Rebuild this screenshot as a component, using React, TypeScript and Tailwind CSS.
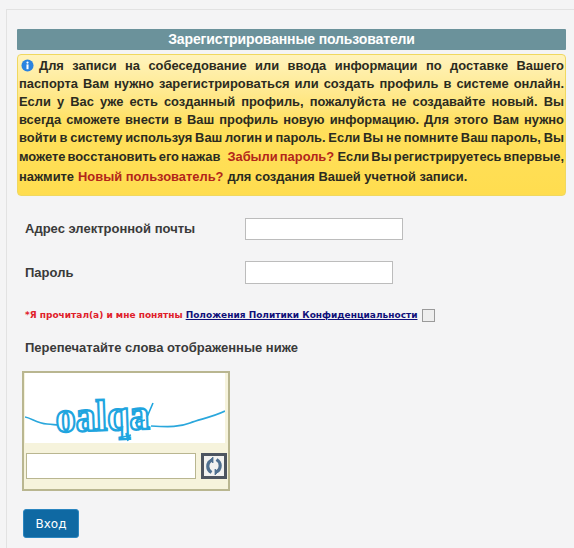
import React from 'react';

const Captcha = () => (
  <svg viewBox="0 0 200 70" className="block w-[200px] h-[70px] bg-white">
    <path d="M0 44 C 6 45 12 50 22 51 S 30 52 34 52 M126 53 C 145 54 155 54 165 50 S 185 45 200 38" fill="none" stroke="#2aa7dc" strokeWidth="1.7" />
    <text x="0" y="0" fontFamily="Liberation Serif" fontWeight="700" fontSize="44" fill="#fff" stroke="#1fa5df" strokeWidth="2.4" textLength="94" lengthAdjust="spacingAndGlyphs" transform="translate(31 59) rotate(-2)">oalqa</text>
    <path d="M98 64 L106 62 M101 60 L103 68 M128 30 L122 44 M110 50 L120 47" stroke="#1fa5df" strokeWidth="1.6" fill="none" />
  </svg>
);

const App: React.FC = () => {
  return (
    <div className="h-[548px] overflow-hidden bg-[#f4f4f5] pt-[9px] pl-[6px] font-['Liberation_Sans',sans-serif]">
      <div className="h-full border-t border-l border-[#e2e2e2] pl-[10px] pt-[19px] pr-[8px]">
        {/* Header */}
        <div className="h-[21px] bg-[#6b929b] text-center text-white text-[14px] font-bold leading-[21px] rounded-[1px] tracking-[-0.13px]">
          Зарегистрированные пользователи
        </div>

        {/* Notice */}
        <div className="mt-[4px] h-[142px] rounded-[4px] border border-[#f0d860] bg-gradient-to-b from-[#fff3bd] via-[#ffe05c] to-[#ffdd4f] px-[1px] pt-[2px] text-[12.9px] leading-[18px] font-bold text-[#2b2b20]">
          <div className="text-justify [text-align-last:justify] [word-spacing:-1.5px]">
            <svg viewBox="0 0 14 14" className="inline-block w-[13px] h-[13px] mr-[5px] mb-[3px] ml-[2px] align-middle">
              <circle cx="7" cy="7" r="6.5" fill="#2a83e0" />
              <circle cx="7" cy="3.8" r="1.2" fill="#fff" />
              <rect x="5.9" y="5.8" width="2.2" height="5.2" fill="#fff" />
            </svg>
            Для записи на собеседование или ввода информации по доставке Вашего паспорта Вам нужно зарегистрироваться или создать профиль в системе онлайн. Если у Вас уже есть созданный профиль, пожалуйста не создавайте новый. Вы всегда сможете внести в Ваш профиль новую информацию. Для этого Вам нужно войти в систему используя Ваш логин и пароль. Если Вы не помните Ваш пароль, Вы
          </div>
          <div className="mt-[1px] flex whitespace-nowrap [word-spacing:-1.5px]">
            <span>можете восстановить его нажав</span>
            <span className="ml-[7px] text-[#b3261a]">Забыли пароль?</span>
            <span className="ml-auto">Если Вы регистрируетесь впервые,</span>
          </div>
          <div className="mt-[2px] flex gap-[4px]">
            <span>нажмите</span>
            <span className="text-[#b3261a]">Новый пользователь?</span>
            <span>для создания Вашей учетной записи.</span>
          </div>
        </div>

        {/* Form */}
        <div className="mt-[22px] flex items-center h-[22px]">
          <label className="w-[220px] pl-[8px] text-[13px] font-bold text-[#3a3a3a]">Адрес электронной почты</label>
          <input className="ml-[8px] w-[158px] h-[22px] bg-white border border-[#bcbcbc] outline-none" />
        </div>
        <div className="mt-[21px] flex items-center h-[23px]">
          <label className="w-[220px] pl-[8px] pt-[1px] text-[13px] font-bold text-[#3a3a3a]">Пароль</label>
          <input className="ml-[8px] w-[148px] h-[23px] bg-white border border-[#bcbcbc] outline-none" />
        </div>

        <div className="mt-[23px] flex items-center h-[18px] pl-[8px] text-[9px] font-bold font-['DejaVu_Sans',sans-serif]">
          <span className="text-[#e0202a]">*Я прочитал(а) и мне понятны</span>
          <a className="ml-[3px] text-[#10107a] underline">Положения Политики Конфиденциальности</a>
          <span className="ml-[4px] mb-[2px] w-[13px] h-[13px] bg-[#eeeeee] border border-[#9a9a9a]" />
        </div>

        <div className="mt-[14px] pl-[8px] text-[13px] leading-[18px] font-bold text-[#3a3a3a]">
          Перепечатайте слова отображенные ниже
        </div>

        {/* Captcha */}
        <div className="mt-[14px] ml-[5px] w-[208px] h-[120px] border-2 border-[#b9b690] bg-[#f6f3dc] pl-[1px]">
          <Captcha />
          <div className="mt-[10px] flex items-center gap-[5px]">
            <input className="ml-[1px] w-[170px] h-[26px] bg-white border border-[#b9b690] outline-none" />
            <div className="w-[26px] h-[26px] border-[3px] border-[#4d5560] bg-[#f2f2f0] flex items-center justify-center">
              <svg viewBox="0 0 20 20" className="w-[20px] h-[20px]" fill="none" stroke="#4f7090" strokeWidth="3.2">
                <path d="M8.5 4 C 5 5 3.8 8 3.8 10.5 S 5 15 7.5 16.5" />
                <path d="M11.5 16 C 15 15 16.2 12 16.2 9.5 S 15 5 12.5 3.5" />
                <path d="M9 1 L9 7 L6 4 Z M11 19 L11 13 L14 16 Z" fill="#4f7090" strokeWidth="0.8" />
              </svg>
            </div>
          </div>
        </div>

        <button className="mt-[18px] ml-[6px] block w-[56px] h-[29px] rounded-[3px] bg-[#0f69a3] border border-[#2b86c0] text-white text-[12px] font-['DejaVu_Sans',sans-serif]">
          Вход
        </button>
      </div>
    </div>
  );
};

export default App;
